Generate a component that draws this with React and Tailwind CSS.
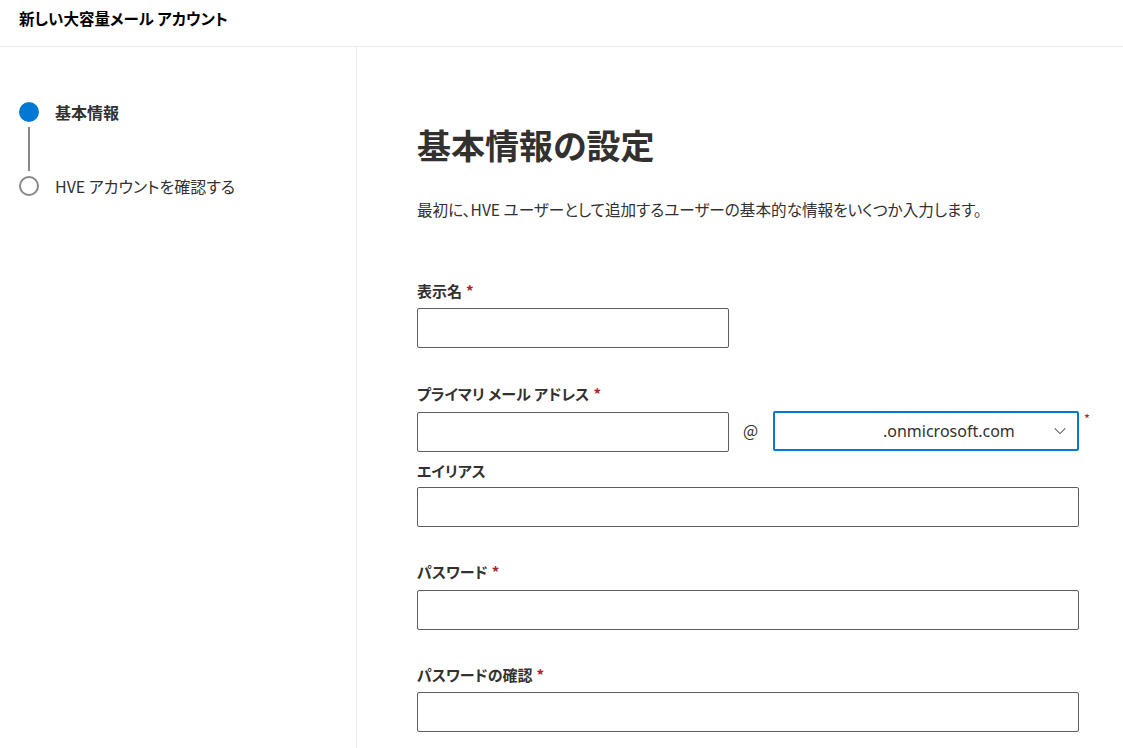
import React from 'react';

const FONT = "[font-family:'Noto_Sans_CJK_JP','Noto_Sans',sans-serif] [font-feature-settings:'palt']";

const Req = () => <span className="ml-1 text-[#a4262c]">*</span>;

const Label = ({ children, required }) => (
  <div className="text-[15px] font-semibold leading-5 text-[#323130]">
    {children}
    {required && <Req />}
  </div>
);

const Input = ({ wide }) => (
  <div
    className={`h-10 rounded-[2px] border border-[#605e5c] bg-white ${wide ? 'w-[662px]' : 'w-[312px]'}`}
  />
);

export default function App() {
  return (
    <div className={`${FONT} h-[748px] w-[1123px] overflow-hidden bg-white text-[#323130]`}>
      <header className="flex h-[47px] items-center border-b border-[#edebe9] pl-[19px] pb-[8px]">
        <h1 className="text-[15.5px] font-semibold text-black">新しい大容量メール アカウント</h1>
      </header>

      <div className="flex h-[701px]">
        <aside className="w-[357px] shrink-0 border-r border-[#edebe9] pl-[19px] pt-[55px]">
          <div className="flex items-center gap-[16px]">
            <span className="h-5 w-5 rounded-full bg-[#0078d4]" />
            <span className="text-[16px] font-semibold leading-5">基本情報</span>
          </div>
          <div className="ml-[9px] my-[5px] h-[44px] w-[2px] bg-[#8a8886]" />
          <div className="flex items-center gap-[16px]">
            <span className="h-5 w-5 rounded-full border-2 border-[#8a8886]" />
            <span className="text-[16px] leading-5">HVE アカウントを確認する</span>
          </div>
        </aside>

        <main className="flex-1 pl-[60px] pt-[76px]">
          <h2 className="text-[34px] font-semibold leading-[44px] text-[#323130]">基本情報の設定</h2>
          <p className="mt-[32px] text-[15.6px] leading-5">
            最初に、HVE ユーザーとして追加するユーザーの基本的な情報をいくつか入力します。
          </p>

          <div className="mt-[62px]">
            <Label required>表示名</Label>
            <div className="mt-[7px]">
              <Input />
            </div>
          </div>

          <div className="mt-[36px]">
            <Label required>プライマリ メール アドレス</Label>
            <div className="mt-[8px] flex items-start">
              <Input />
              <span className="ml-[14px] mt-[6px] w-[30px] text-[16px]">@</span>
              <div className="relative -mt-px flex h-10 w-[306px] items-center rounded-[2px] border-2 border-[#0078d4] pl-[108px] pr-[10px]">
                <span className="flex-1 text-[16px] leading-5 [font-family:'Noto_Sans',sans-serif]">.onmicrosoft.com</span>
                <svg width="14" height="14" viewBox="0 0 16 16" fill="none" stroke="#605e5c" strokeWidth="1.2">
                  <path d="M2 5l6 6 6-6" />
                </svg>
                <span className="absolute -right-[13px] -top-[4px] text-[13px] text-[#a4262c]">*</span>
              </div>
            </div>
          </div>

          <div className="mt-[9px]">
            <Label>エイリアス</Label>
            <div className="mt-[6px]">
              <Input wide />
            </div>
          </div>

          <div className="mt-[35px]">
            <Label required>パスワード</Label>
            <div className="mt-[8px]">
              <Input wide />
            </div>
          </div>

          <div className="mt-[35px]">
            <Label required>パスワードの確認</Label>
            <div className="mt-[7px]">
              <Input wide />
            </div>
          </div>
        </main>
      </div>
    </div>
  );
}
